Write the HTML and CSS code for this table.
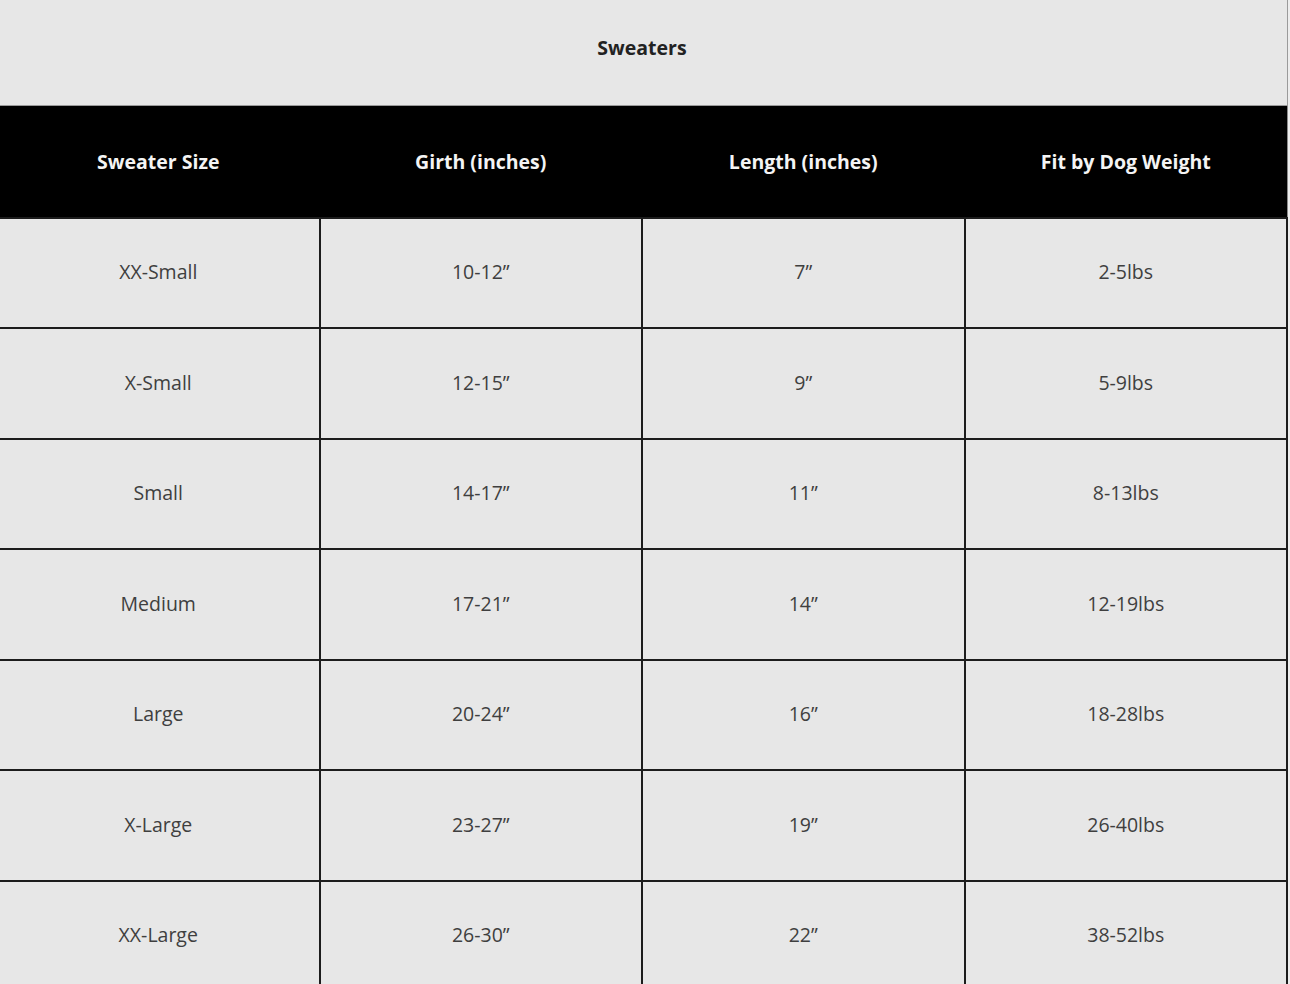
FILE: index.html
```html
<!DOCTYPE html>
<html lang="en">
<head>
<meta charset="utf-8">
<title>Sweaters size chart</title>
<link rel="stylesheet" href="styles.css">
</head>
<body>
<table class="chart">
  <colgroup>
    <col class="col"><col class="col"><col class="col"><col class="col">
  </colgroup>
  <thead>
    <tr class="title-row"><th colspan="4" class="title">Sweaters</th></tr>
    <tr class="head-row">
      <th class="head">Sweater Size</th>
      <th class="head">Girth (inches)</th>
      <th class="head">Length (inches)</th>
      <th class="head">Fit by Dog Weight</th>
    </tr>
  </thead>
  <tbody>
    <tr class="row"><td>XX-Small</td><td>10-12”</td><td>7”</td><td>2-5lbs</td></tr>
    <tr class="row"><td>X-Small</td><td>12-15”</td><td>9”</td><td>5-9lbs</td></tr>
    <tr class="row"><td>Small</td><td>14-17”</td><td>11”</td><td>8-13lbs</td></tr>
    <tr class="row"><td>Medium</td><td>17-21”</td><td>14”</td><td>12-19lbs</td></tr>
    <tr class="row"><td>Large</td><td>20-24”</td><td>16”</td><td>18-28lbs</td></tr>
    <tr class="row"><td>X-Large</td><td>23-27”</td><td>19”</td><td>26-40lbs</td></tr>
    <tr class="row"><td>XX-Large</td><td>26-30”</td><td>22”</td><td>38-52lbs</td></tr>
  </tbody>
</table>
</body>
</html>
```
FILE: styles.css
```css
html, body {
  margin: 0;
  padding: 0;
  background: #ededed;
  overflow: hidden;
}

body {
  font-family: "Open Sans", "Liberation Sans", sans-serif;
  font-size: 19.5px;
}

.chart {
  border-collapse: collapse;
  table-layout: fixed;
  width: 1292px;
  margin: -5px 0 0 -4px;
  background: #e7e7e7;
}

.col {
  width: 25%;
}

.title-row {
  height: 110px;
}

.title {
  font-weight: 700;
  color: #222;
  text-align: center;
  vertical-align: middle;
  border: 1px solid #9a9a9a;
  padding: 0 0 6px;
}

.head-row {
  height: 112px;
}

.head {
  background: #000;
  color: #f4f4f4;
  font-weight: 700;
  text-align: center;
  vertical-align: middle;
  padding: 0;
  border: 1px solid #000;
}

.head:last-child {
  border-right: 1px solid #8a8a8a;
}

.row {
  height: 110.5px;
}

.row td {
  border: 2px solid #1c1c1c;
  text-align: center;
  vertical-align: middle;
  color: #3f3f3f;
  padding: 0 0 2px;
}
```
